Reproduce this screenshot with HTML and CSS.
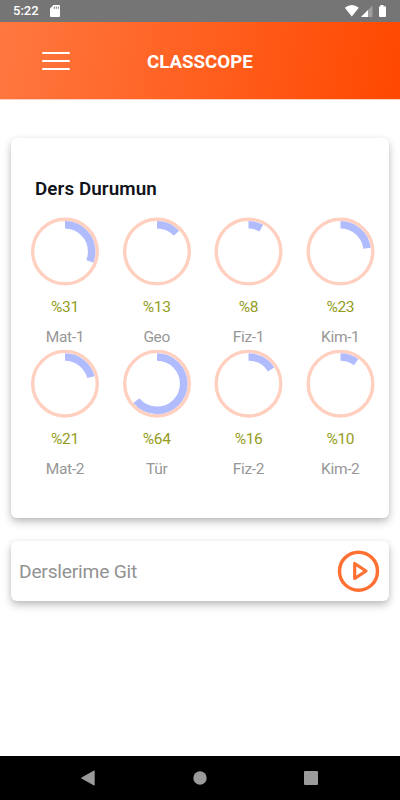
FILE: index.html
```html
<!DOCTYPE html>
<html lang="tr">
<head>
    <meta charset="UTF-8">
    <meta name="viewport" content="width=device-width, initial-scale=1">
    <title>Classcope</title>
    <link rel="stylesheet" href="styles.css">
</head>
<body>
    <div class="statusbar">
        <span class="time">5:22</span>
        <svg class="sdcard" width="10" height="12" viewBox="0 0 10 12">
            <path fill="#fff" d="M3.5 0H9a1 1 0 0 1 1 1v10a1 1 0 0 1-1 1H1a1 1 0 0 1-1-1V3.5z"/>
            <path stroke="#757575" stroke-width="1" d="M4.3 1.6v2.2M6.3 1.6v2.2M8.3 1.6v2.2"/>
        </svg>
        <svg class="signals" width="43" height="12" viewBox="0 0 43 12">
            <path fill="#fff" d="M.8 2.700Q7.800-2.700 14.800 2.700L7.800 11.500z"/>
            <path fill="#fff" fill-opacity=".3" d="M28.500 .5v11.500H17z"/>
            <path fill="#fff" d="M24 5v7H17z"/>
            <path fill="#fff" d="M36.500 0h3v1.200h1.500q1 0 1 1v8.800q0 1-1 1h-5q-1 0-1-1V2.200q0-1 1-1h.5z"/>
        </svg>
    </div>

    <header class="header">
        <div class="menu">
            <span></span>
            <span></span>
            <span></span>
        </div>
        <h1>CLASSCOPE</h1>
    </header>

    <main>
        <section class="card status">
            <h2>Ders Durumun</h2>
            <div class="lessons">
                <div class="lesson">
                    <svg class="ring" viewBox="0 0 68 68">
                        <circle class="track" cx="34" cy="33.500" r="32.300"/>
                        <circle class="value" cx="34" cy="33.500" r="26.700" pathLength="100" stroke-dasharray="31 100"/>
                    </svg>
                    <span class="percent">%31</span>
                    <span class="name">Mat-1</span>
                </div>
                <div class="lesson">
                    <svg class="ring" viewBox="0 0 68 68">
                        <circle class="track" cx="34" cy="33.500" r="32.300"/>
                        <circle class="value" cx="34" cy="33.500" r="26.700" pathLength="100" stroke-dasharray="13 100"/>
                    </svg>
                    <span class="percent">%13</span>
                    <span class="name">Geo</span>
                </div>
                <div class="lesson">
                    <svg class="ring" viewBox="0 0 68 68">
                        <circle class="track" cx="34.500" cy="33.500" r="32.300"/>
                        <circle class="value" cx="34.500" cy="33.500" r="26.700" pathLength="100" stroke-dasharray="8 100"/>
                    </svg>
                    <span class="percent">%8</span>
                    <span class="name">Fiz-1</span>
                </div>
                <div class="lesson">
                    <svg class="ring" viewBox="0 0 68 68">
                        <circle class="track" cx="34.500" cy="33.500" r="32.300"/>
                        <circle class="value" cx="34.500" cy="33.500" r="26.700" pathLength="100" stroke-dasharray="23 100"/>
                    </svg>
                    <span class="percent">%23</span>
                    <span class="name">Kim-1</span>
                </div>
                <div class="lesson">
                    <svg class="ring" viewBox="0 0 68 68">
                        <circle class="track" cx="34" cy="33.700" r="32.300"/>
                        <circle class="value" cx="34" cy="33.700" r="26.700" pathLength="100" stroke-dasharray="21 100"/>
                    </svg>
                    <span class="percent">%21</span>
                    <span class="name">Mat-2</span>
                </div>
                <div class="lesson">
                    <svg class="ring" viewBox="0 0 68 68">
                        <circle class="track" cx="34" cy="33.700" r="32.300"/>
                        <circle class="value" cx="34" cy="33.700" r="26.700" pathLength="100" stroke-dasharray="64 100"/>
                    </svg>
                    <span class="percent">%64</span>
                    <span class="name">Tür</span>
                </div>
                <div class="lesson">
                    <svg class="ring" viewBox="0 0 68 68">
                        <circle class="track" cx="34.500" cy="33.700" r="32.300"/>
                        <circle class="value" cx="34.500" cy="33.700" r="26.700" pathLength="100" stroke-dasharray="16 100"/>
                    </svg>
                    <span class="percent">%16</span>
                    <span class="name">Fiz-2</span>
                </div>
                <div class="lesson">
                    <svg class="ring" viewBox="0 0 68 68">
                        <circle class="track" cx="34.500" cy="33.700" r="32.300"/>
                        <circle class="value" cx="34.500" cy="33.700" r="26.700" pathLength="100" stroke-dasharray="10 100"/>
                    </svg>
                    <span class="percent">%10</span>
                    <span class="name">Kim-2</span>
                </div>
            </div>
        </section>

        <section class="card goto">
            <span>Derslerime Git</span>
            <svg width="42" height="42" viewBox="0 0 42 42" fill="none" stroke="#ff7033" stroke-linejoin="round">
                <circle cx="21.500" cy="21.200" r="19" stroke-width="3.500"/>
                <path stroke-width="3.200" d="M17.700 13.500v15l11.300-7.500z"/>
            </svg>
        </section>
    </main>

    <nav class="navbar">
        <svg width="14" height="16" viewBox="0 0 14 16"><path d="M13 .5q.7-.3.700.5v14q0 .8-.7.500L.5 8.500q-.5-.5 0-1z"/></svg>
        <svg width="14" height="14" viewBox="0 0 14 14"><circle cx="7" cy="7" r="6.700"/></svg>
        <svg width="14" height="14" viewBox="0 0 14 14"><rect width="14" height="14" rx="1"/></svg>
    </nav>
</body>
</html>
```
FILE: styles.css
```css
* {
    box-sizing: border-box;
}
body {
    margin: 0;
    height: 800px;
    display: flex;
    flex-direction: column;
    background: #fff;
    font-family: Roboto, "Liberation Sans", sans-serif;
}
svg {
    display: block;
    overflow: visible;
}

.statusbar {
    height: 22px;
    padding: 0 13px;
    display: flex;
    align-items: center;
    background: #757575;
    color: #fff;
}
.time {
    width: 37px;
    font-size: 13px;
    font-weight: 500;
    line-height: 22px;
}
.signals {
    margin-left: auto;
}

.header {
    height: 77px;
    padding: 0 42px;
    display: flex;
    align-items: center;
    background: linear-gradient(100deg, #ff7840, #ff4800);
    box-shadow: 0 1px 0 #ffd0bf;
}
.menu {
    width: 28px;
    height: 18px;
    display: flex;
    flex-direction: column;
    justify-content: space-between;
}
.menu span {
    height: 2px;
    border-radius: 1px;
    background: #fff;
}
.header h1 {
    margin: 2px 0 0 77px;
    color: #fff;
    font-size: 18.7px;
    font-weight: 700;
}

main {
    flex: 1;
    padding: 38.5px 11px 0;
}
.card {
    border-radius: 6px;
    background: #fff;
    box-shadow: 0 4px 9px rgba(0,0,0,.24), 0 1px 5px rgba(0,0,0,.06);
}

.status {
    height: 380.5px;
    padding: 39px 3px 0 8px;
}
.status h2 {
    margin: 0 0 17px 16px;
    color: #10131a;
    font-size: 18.8px;
    font-weight: 600;
    letter-spacing: .1px;
    line-height: 24px;
}
.lessons {
    display: grid;
    grid-template-columns: repeat(4, 91.8px);
    grid-auto-rows: 132.2px;
}
.lesson {
    display: flex;
    flex-direction: column;
    align-items: center;
    font-size: 15.5px;
    line-height: 20px;
    letter-spacing: -.35px;
}
.ring {
    width: 68px;
    height: 68px;
}
.ring circle {
    fill: none;
}
.track {
    stroke: #ffd0bf;
    stroke-width: 3.4;
}
/* start the arc at 12 o'clock */
.value {
    stroke: #b1bcff;
    stroke-width: 7.6;
    transform: rotate(-90deg);
    transform-box: fill-box;
    transform-origin: center;
}
.percent {
    margin-top: 11px;
    color: #949c1c;
}
.name {
    margin-top: 10px;
    color: #979797;
}

.goto {
    height: 60px;
    margin-top: 23px;
    padding: 0 10px 0 8px;
    display: flex;
    align-items: center;
    justify-content: space-between;
    color: #929292;
    font-size: 19.2px;
    letter-spacing: -.2px;
}

.navbar {
    height: 44px;
    padding: 0 82px 0 81px;
    display: flex;
    align-items: center;
    justify-content: space-between;
    background: #000;
}
.navbar svg {
    fill: #9b9b9b;
}
```
